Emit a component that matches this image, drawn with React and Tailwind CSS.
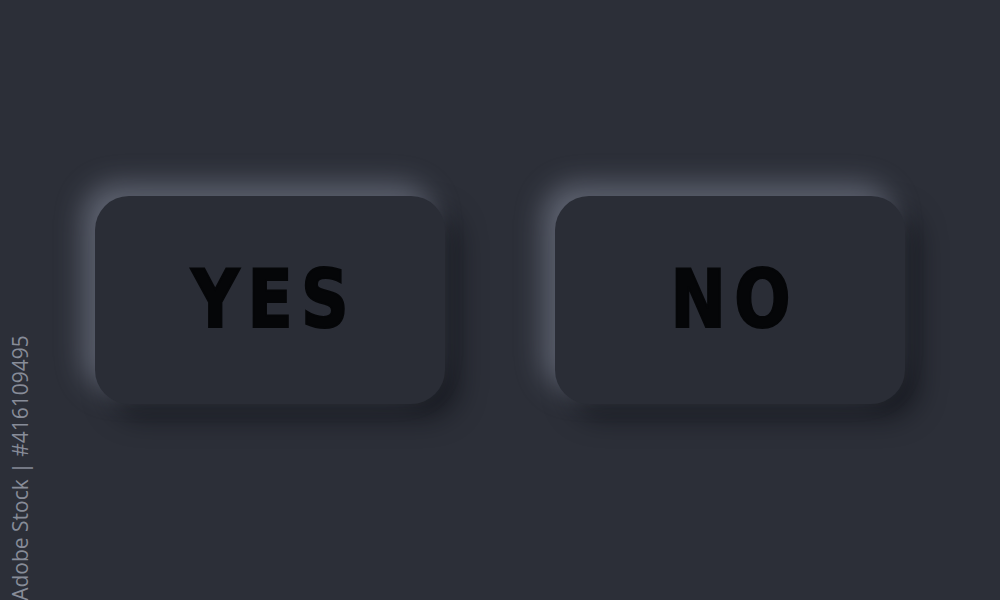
export default function App() {
  return (
    <div className="relative flex h-[600px] w-[1000px] items-center justify-center gap-[110px] overflow-hidden bg-[#2c2f38]">
      <SoftButton label="YES" />
      <SoftButton label="NO" />

      {/* stock id caption running up the left edge */}
      <div className="absolute left-[20px] top-[468px] -translate-x-1/2 -translate-y-1/2 -rotate-90 whitespace-nowrap text-[21px] leading-none text-[#a6abb8]/75 [font-family:'Open_Sans','DejaVu_Sans',sans-serif]">
        Adobe Stock | #416109495
      </div>
    </div>
  );
}

function SoftButton({ label }) {
  return (
    <button
      type="button"
      className="flex h-[208px] w-[350px] items-center justify-center rounded-[34px] bg-[#2a2d36] shadow-[-12px_-12px_28px_rgba(175,183,205,0.38),14px_14px_26px_rgba(10,11,16,0.55)]"
    >
      <span className="mr-[-9px] scale-x-[0.92] text-[80px] font-bold leading-none tracking-[9px] text-[#050608] [-webkit-text-stroke:2px_#050608] [font-family:'DejaVu_Sans_Condensed','DejaVu_Sans',sans-serif]">
        {label}
      </span>
    </button>
  );
}
